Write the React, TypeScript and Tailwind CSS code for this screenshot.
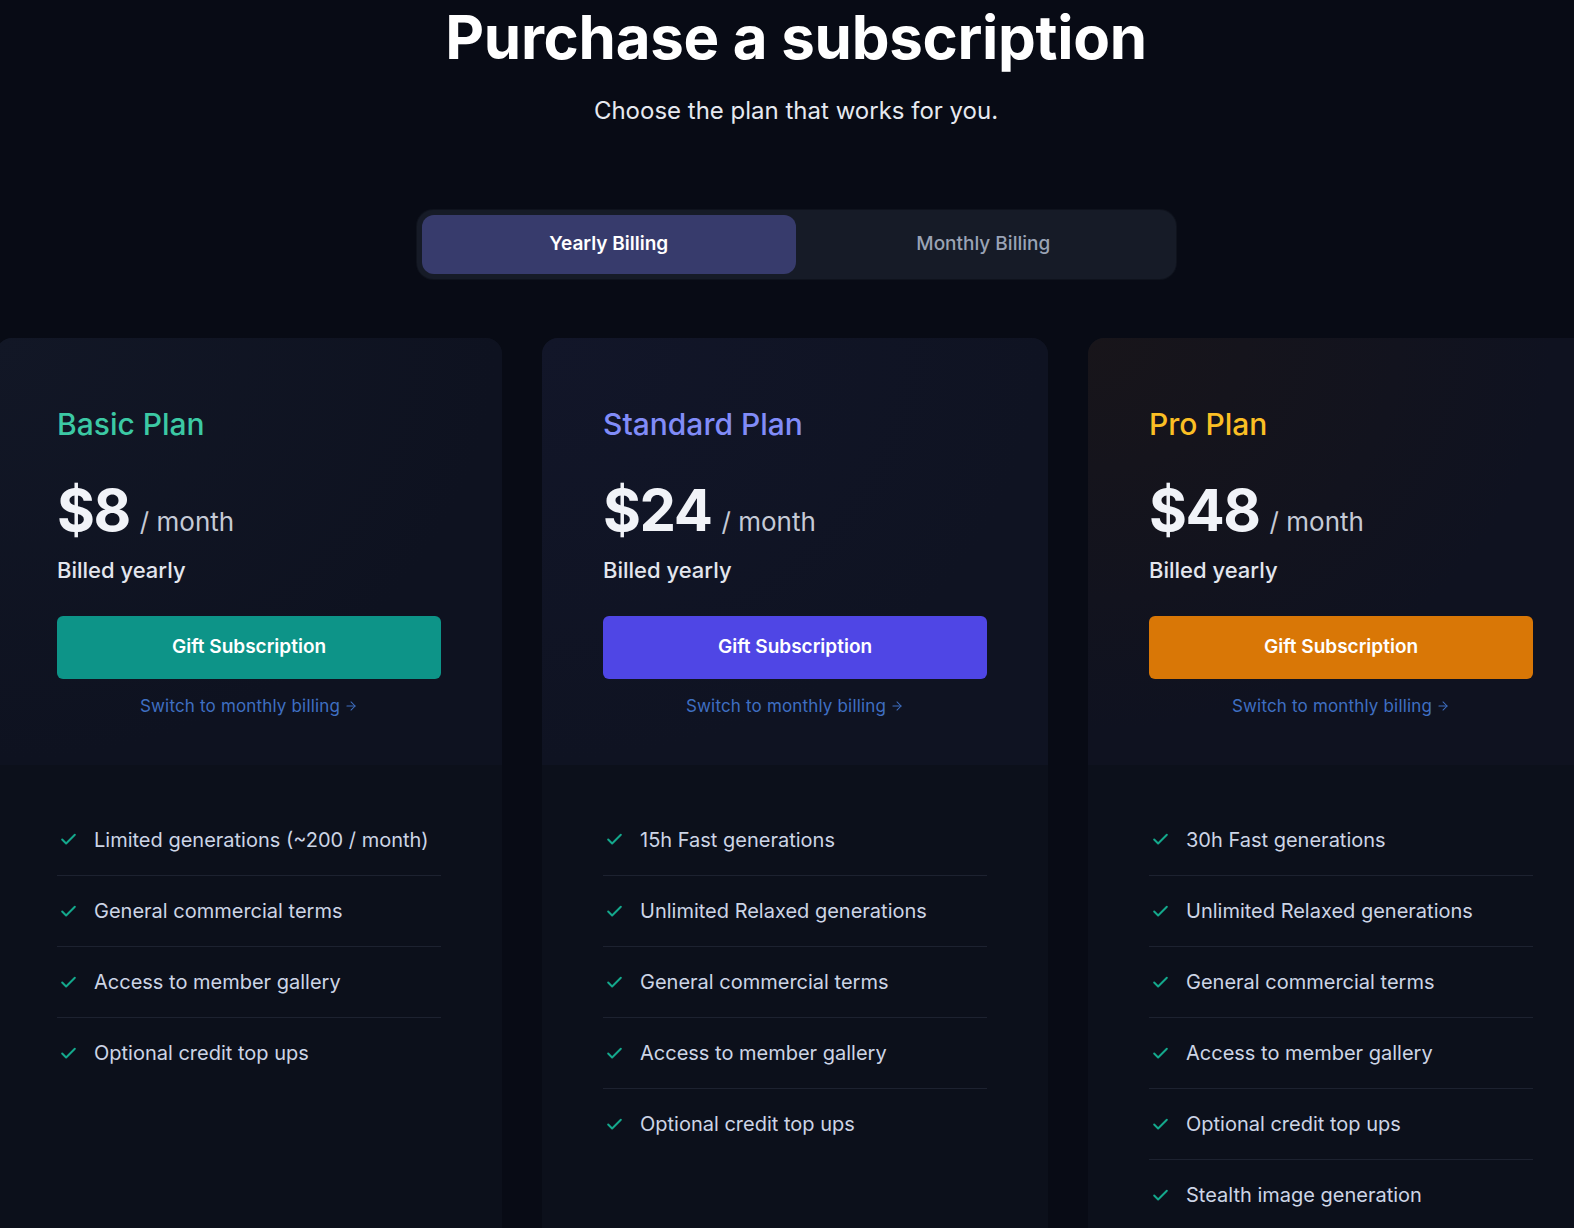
import { Check, ArrowRight } from 'lucide-react';

type Plan = {
  name: string;
  price: string;
  titleColor: string;
  buttonColor: string;
  cardBg: string;
  features: string[];
};

const PLANS: Plan[] = [
  {
    name: 'Basic Plan',
    price: '$8',
    titleColor: 'text-[#3cc9a4]',
    buttonColor: 'bg-[#0d9488]',
    cardBg: 'bg-[radial-gradient(ellipse_at_top_left,#121726_0%,#0e1220_70%)]',
    features: [
      'Limited generations (~200 / month)',
      'General commercial terms',
      'Access to member gallery',
      'Optional credit top ups',
    ],
  },
  {
    name: 'Standard Plan',
    price: '$24',
    titleColor: 'text-[#818cf8]',
    buttonColor: 'bg-[#4f46e5]',
    cardBg: 'bg-[radial-gradient(ellipse_at_top_left,#121629_0%,#0f1322_70%)]',
    features: [
      '15h Fast generations',
      'Unlimited Relaxed generations',
      'General commercial terms',
      'Access to member gallery',
      'Optional credit top ups',
    ],
  },
  {
    name: 'Pro Plan',
    price: '$48',
    titleColor: 'text-[#fbbf24]',
    buttonColor: 'bg-[#d97706]',
    cardBg: 'bg-[radial-gradient(ellipse_at_top_left,#18151a_0%,#0f1220_65%)]',
    features: [
      '30h Fast generations',
      'Unlimited Relaxed generations',
      'General commercial terms',
      'Access to member gallery',
      'Optional credit top ups',
      'Stealth image generation',
    ],
  },
];

function PlanCard({ plan }: { plan: Plan }) {
  return (
    <div className="w-[506px] shrink-0 rounded-2xl bg-[#0c101b] overflow-hidden">
      <div className={`${plan.cardBg} px-[61px] pt-[68px] pb-[47px]`}>
        <h2 className={`${plan.titleColor} text-[30px] leading-[36px] font-medium`}>{plan.name}</h2>
        <div className="mt-[38px] flex items-baseline gap-[10px]">
          <span className="text-[58px] leading-[60px] font-bold text-[#f1f3f8] tracking-tight">{plan.price}</span>
          <span className="text-[26px] leading-[30px] text-[#c5cad6]">/ month</span>
        </div>
        <p className="mt-4 text-[22px] leading-[28px] font-medium text-[#e3e6ee]">Billed yearly</p>
        <button
          className={`${plan.buttonColor} mt-8 h-[63px] w-full rounded-md text-[19px] font-semibold text-white`}
        >
          Gift Subscription
        </button>
        <a className="mt-[15px] flex items-center justify-center gap-1 text-[17px] leading-6 tracking-[0.01em] text-[#3f6fc2]">
          Switch to monthly billing
          <ArrowRight size={14} strokeWidth={1.75} />
        </a>
      </div>
      <ul className="px-[61px] pt-[39px] pb-10">
        {plan.features.map((f, i) => (
          <li
            key={f}
            className={`flex items-center h-[71px] ${i > 0 ? 'border-t border-[#1d2230]' : ''}`}
          >
            <Check size={19} strokeWidth={2.5} className="ml-[2px] text-[#14a88c]" />
            <span className="ml-[16px] text-[20px] text-[#cdd5e6]">{f}</span>
          </li>
        ))}
      </ul>
    </div>
  );
}

export default function App() {
  return (
    <div
      className="min-h-screen w-full overflow-hidden bg-[#080b15] text-white"
      style={{ fontFamily: 'Inter, "Noto Sans", sans-serif' }}
    >
      <div className="flex flex-col items-center pl-[18px]">
        <h1 className="mt-[2px] text-[60px] leading-[70px] font-bold tracking-[-0.005em] text-white">
          Purchase a subscription
        </h1>
        <p className="mt-[24px] text-[24px] leading-[30px] text-[#e6e9f0]">Choose the plan that works for you.</p>
        <div className="mt-[84px] flex h-[69px] w-[759px] rounded-2xl bg-[#161b27] p-[5px] ring-1 ring-[#0f131d]">
          <button className="flex-1 rounded-xl bg-[#373b6c] text-[19px] font-semibold text-white">
            Yearly Billing
          </button>
          <button className="flex-1 rounded-xl text-[19px] font-medium text-[#9aa3b5]">Monthly Billing</button>
        </div>
      </div>
      <div className="mt-[59px] -ml-1 flex gap-10">
        {PLANS.map((p) => (
          <PlanCard key={p.name} plan={p} />
        ))}
      </div>
    </div>
  );
}
